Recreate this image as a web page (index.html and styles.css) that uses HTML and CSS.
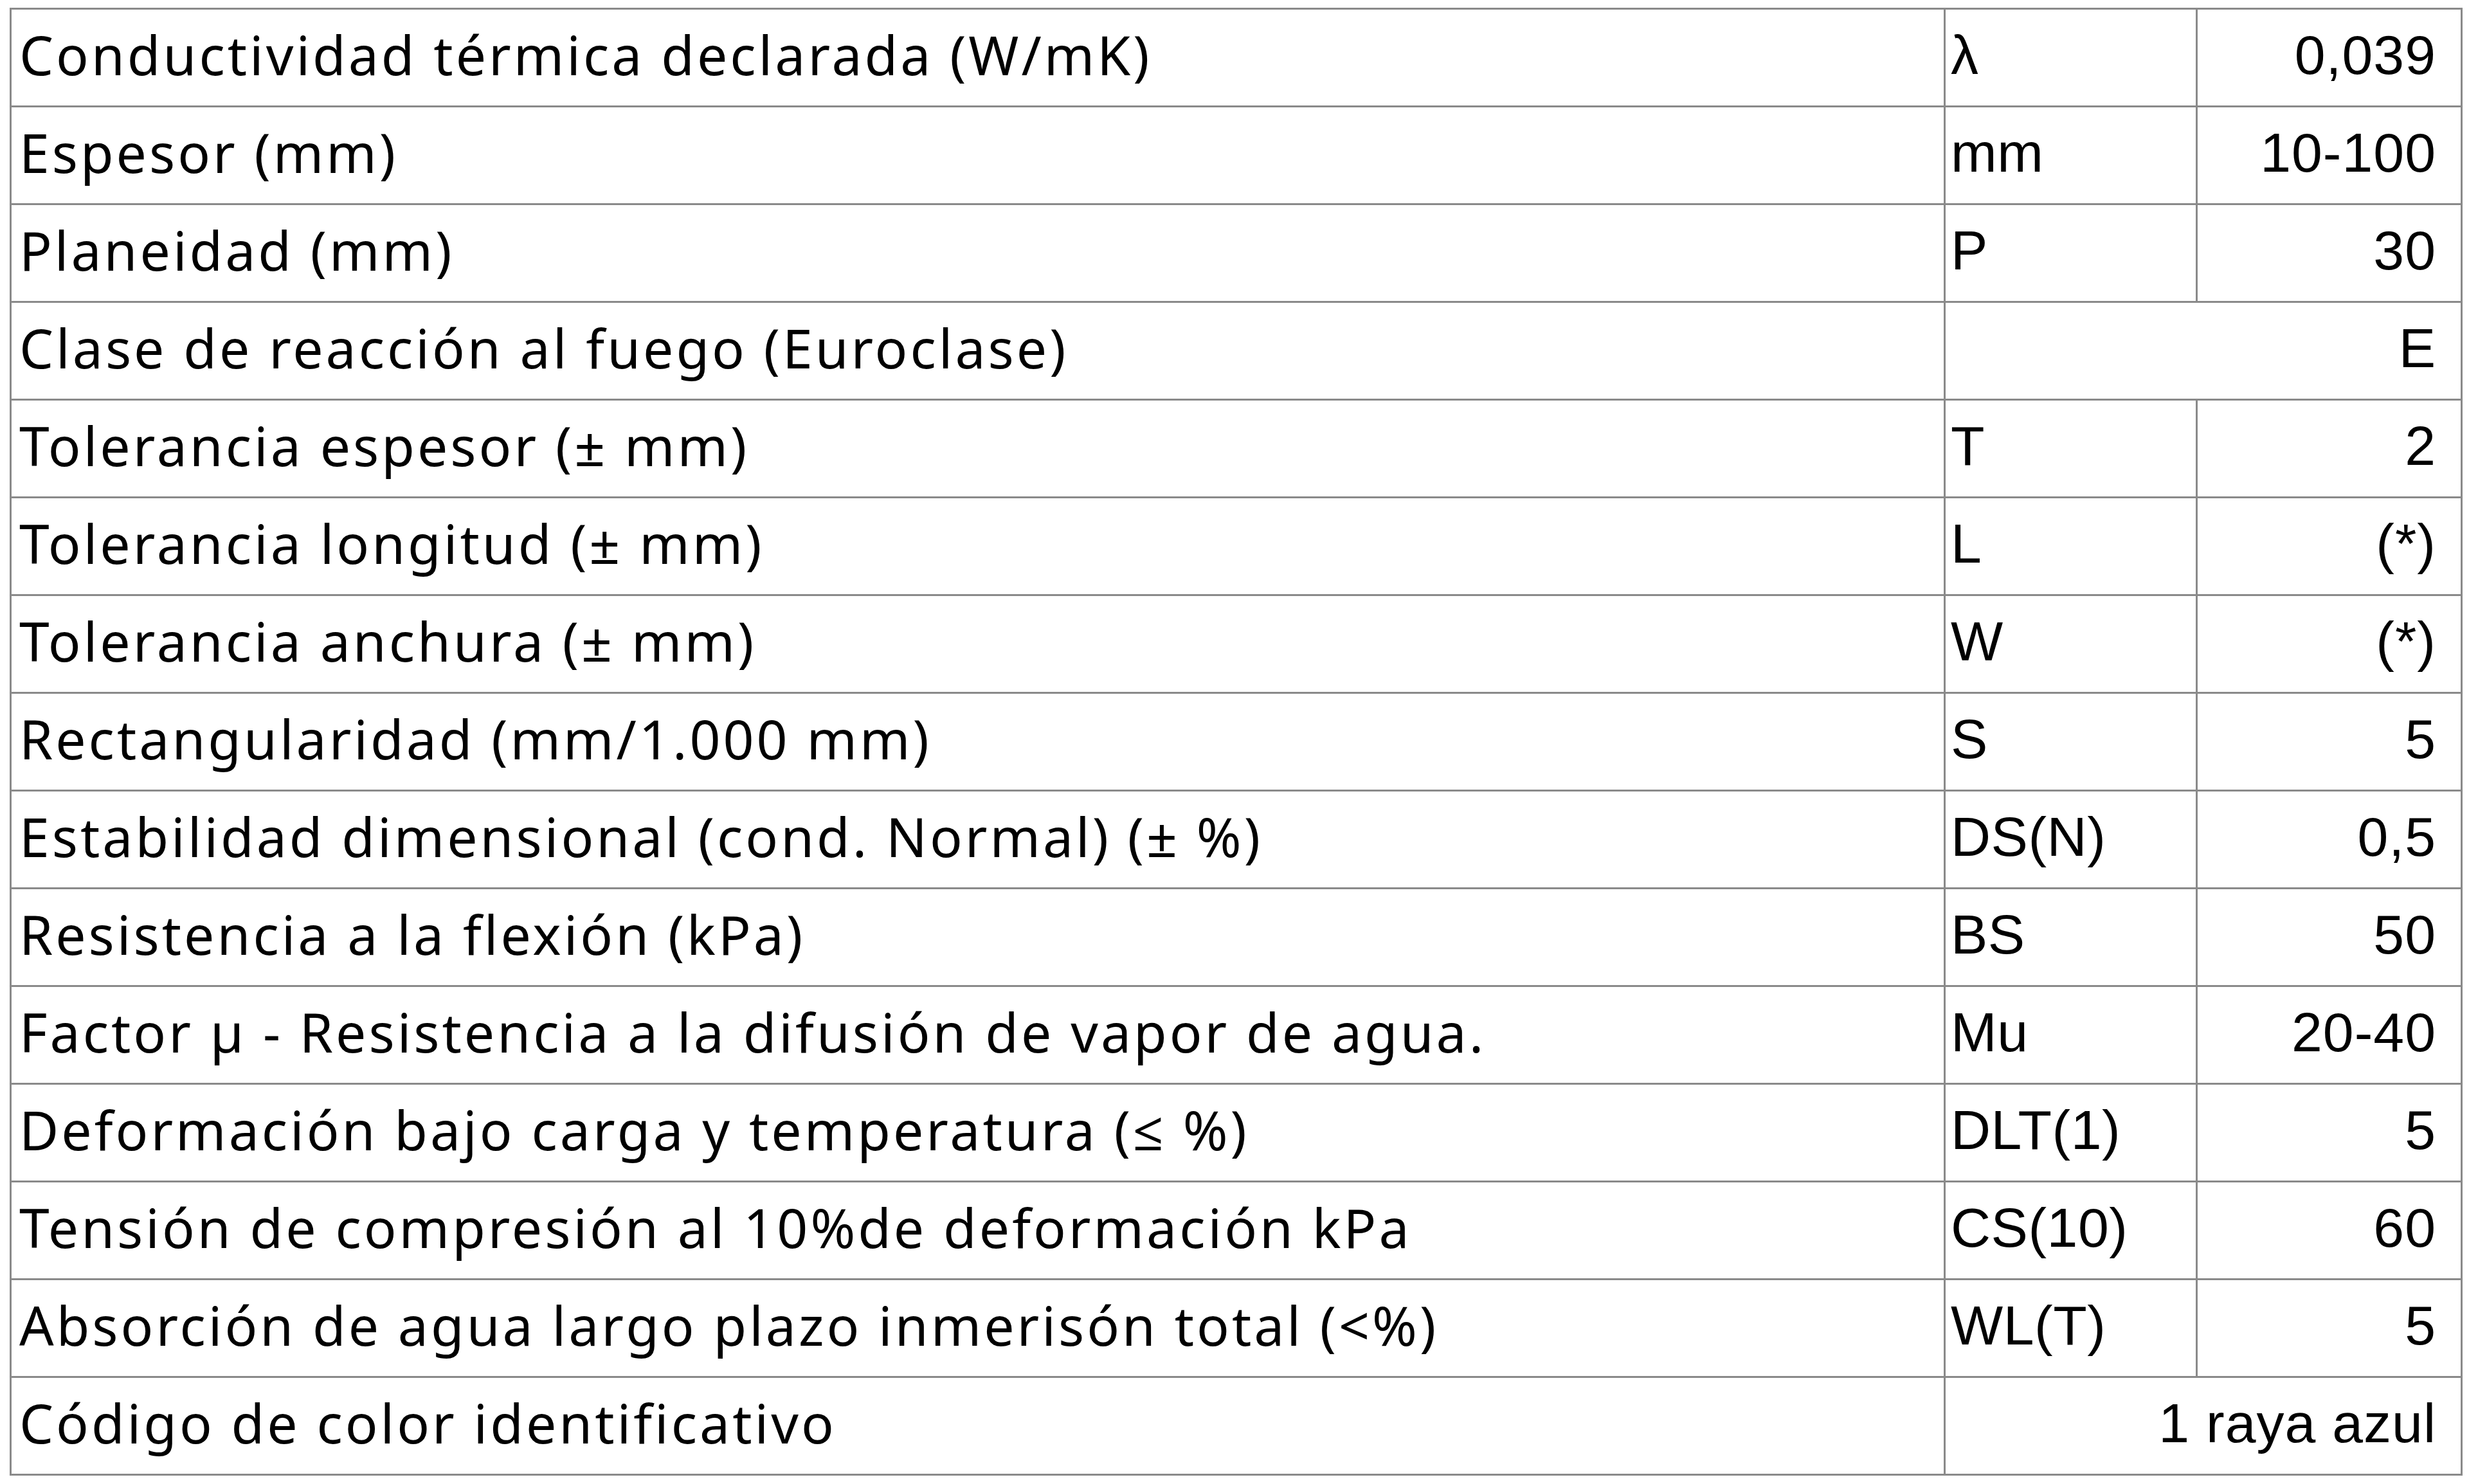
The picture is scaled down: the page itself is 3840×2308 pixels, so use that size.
FILE: index.html
```html
<!DOCTYPE html>
<html lang="es">
<head>
<meta charset="utf-8">
<title>Propiedades</title>
<link rel="stylesheet" href="styles.css">
</head>
<body>
<table class="specs">
  <colgroup>
    <col class="c-label">
    <col class="c-code">
    <col class="c-value">
  </colgroup>
  <tbody>
    <tr><td class="label">Conductividad térmica declarada (W/mK)</td><td class="code">λ</td><td class="value">0,039</td></tr>
    <tr><td class="label">Espesor (mm)</td><td class="code">mm</td><td class="value">10-100</td></tr>
    <tr><td class="label">Planeidad (mm)</td><td class="code">P</td><td class="value">30</td></tr>
    <tr><td class="label">Clase de reacción al fuego (Euroclase)</td><td class="value" colspan="2">E</td></tr>
    <tr><td class="label">Tolerancia espesor (± mm)</td><td class="code">T</td><td class="value">2</td></tr>
    <tr><td class="label">Tolerancia longitud (± mm)</td><td class="code">L</td><td class="value">(*)</td></tr>
    <tr><td class="label">Tolerancia anchura (± mm)</td><td class="code">W</td><td class="value">(*)</td></tr>
    <tr><td class="label">Rectangularidad (mm/1.000 mm)</td><td class="code">S</td><td class="value">5</td></tr>
    <tr><td class="label">Estabilidad dimensional (cond. Normal) (± %)</td><td class="code">DS(N)</td><td class="value">0,5</td></tr>
    <tr><td class="label">Resistencia a la flexión (kPa)</td><td class="code">BS</td><td class="value">50</td></tr>
    <tr><td class="label">Factor µ - Resistencia a la difusión de vapor de agua.</td><td class="code">Mu</td><td class="value">20-40</td></tr>
    <tr><td class="label">Deformación bajo carga y temperatura (≤ %)</td><td class="code">DLT(1)</td><td class="value">5</td></tr>
    <tr><td class="label">Tensión de compresión al 10%de deformación kPa</td><td class="code">CS(10)</td><td class="value">60</td></tr>
    <tr><td class="label">Absorción de agua largo plazo inmerisón total (&lt;%)</td><td class="code">WL(T)</td><td class="value">5</td></tr>
    <tr><td class="label">Código de color identificativo</td><td class="value" colspan="2">1 raya azul</td></tr>
  </tbody>
</table>
</body>
</html>
```

FILE: styles.css
```css
html, body {
  margin: 0;
  padding: 0;
  background: #ffffff;
}

body {
  padding: 12px 12px 0 15px;
}

.specs {
  border-collapse: collapse;
  width: 3812px;
  table-layout: fixed;
  color: #000;
}

.c-label { width: 3008px; }
.c-code { width: 392px; }
.c-value { width: 412px; }

.specs tr {
  height: 152px;
}

.specs td {
  border: 3px solid #8a8a8a;
  padding: 0 0 10px 0;
  vertical-align: middle;
  white-space: nowrap;
  line-height: 1;
}

.label {
  font-family: "Noto Sans", "Open Sans", sans-serif;
  font-size: 84px;
  padding-left: 12px !important;
  letter-spacing: 4px;
}

.code {
  font-family: "Liberation Sans", Arial, sans-serif;
  font-size: 86px;
  padding-left: 8px !important;
  letter-spacing: 0.5px;
}

.value {
  font-family: "Liberation Sans", Arial, sans-serif;
  font-size: 86px;
  text-align: right;
  padding-right: 38px !important;
  letter-spacing: 1px;
}
```
